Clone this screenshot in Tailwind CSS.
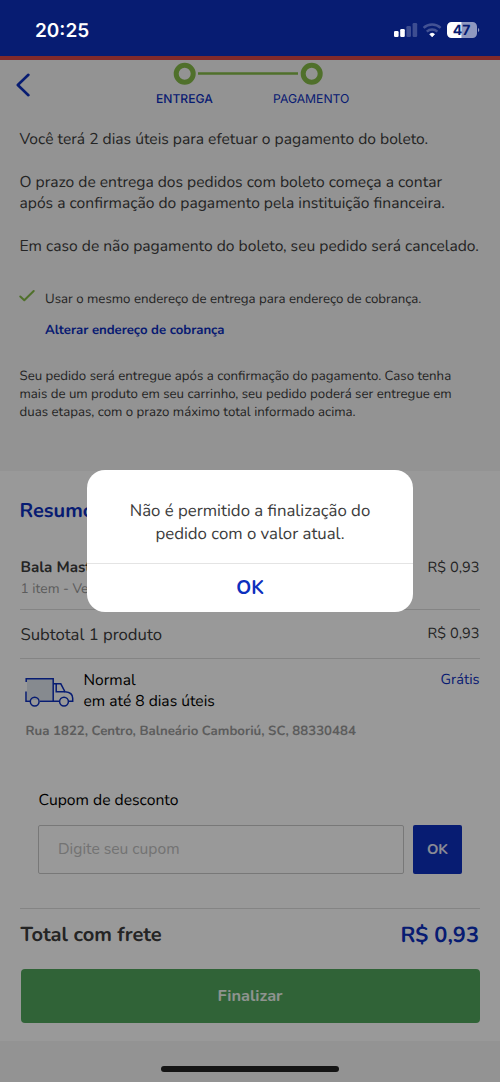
<!DOCTYPE html>
<html lang="pt-BR">
<head>
    <meta charset="UTF-8">
    <meta name="viewport" content="width=device-width, initial-scale=1.0">
    <title>Pagamento</title>
    <script src="https://cdn.jsdelivr.net/npm/@tailwindcss/browser@4"></script>
</head>
<body class="bg-[#f5f5f5] font-['Nunito','Lato',sans-serif] text-[#3c3c3c] [text-rendering:geometricPrecision]">
    <div class="relative w-[500px] h-[1082px] overflow-hidden flex flex-col">

        <!-- Status bar -->
        <div class="h-[60px] shrink-0 bg-[#0d2fbe] border-b-4 border-[#d74649]">
            <div class="relative z-20 flex items-start justify-between pl-[35px] pr-[20px] pt-[17px] text-white">
                <span class="font-['Inter',sans-serif] font-semibold text-[19px] leading-7">20:25</span>
                <svg class="w-[86px] h-[18px] mt-[4px]" viewBox="0 0 86 18">
                    <g fill="#fff">
                        <rect x="0" y="10" width="4.6" height="6" rx="1.2"/>
                        <rect x="6.2" y="8" width="4.6" height="8" rx="1.2"/>
                        <rect x="12.4" y="5" width="4.6" height="11" rx="1.2" opacity=".22"/>
                        <rect x="18.6" y="2" width="4.6" height="14" rx="1.2" opacity=".22"/>
                    </g>
                    <g fill="none" stroke="#fff" stroke-width="2.5" opacity=".24">
                        <path d="M29.6 6.9a12.4 12.4 0 0 1 17 0"/>
                        <path d="M32.8 10.6a8 8 0 0 1 10.6 0"/>
                    </g>
                    <path d="M35.7 13.2a3.7 3.7 0 0 1 4.9 0l-2.45 2.7z" fill="#fff" stroke="#fff" stroke-width=".6" stroke-linejoin="round"/>
                    <path d="M57.5 1H67.7v16H57.5a4.5 4.5 0 0 1-4.5-4.5v-7A4.5 4.5 0 0 1 57.5 1z" fill="#fff"/>
                    <path d="M67.7 1h10.8A4.5 4.5 0 0 1 83 5.5v7a4.5 4.5 0 0 1-4.5 4.5H67.7z" fill="#fff" opacity=".55"/>
                    <path d="M84 7a2.2 2.2 0 0 1 0 4z" fill="#fff" opacity=".55"/>
                    <text x="67.5" y="14" text-anchor="middle" font-family="Inter, sans-serif" font-size="14" font-weight="700" fill="#081c72">47</text>
                </svg>
            </div>
        </div>

        <!-- Checkout steps -->
        <header class="flex h-[60px] shrink-0 pl-[16px] font-['Inter',sans-serif] text-xs text-[#0d2fbe]">
            <svg class="w-4 h-6 mt-[13px]" viewBox="0 0 16 24" fill="none" stroke="#0d2fbe" stroke-width="2.6" stroke-linecap="round" stroke-linejoin="round">
                <path d="M12.4 1.8 1.8 12l10.6 10.2"/>
            </svg>
            <div class="ml-[121px]">
                <svg class="w-[200px] h-[28px]" viewBox="0 0 200 28" fill="none" stroke="#85bb49">
                    <circle cx="31.7" cy="13.7" r="8.5" stroke-width="5"/>
                    <path d="M45 13.5h100" stroke-width="2.4"/>
                    <circle cx="158.7" cy="13.7" r="8.5" stroke-width="5"/>
                </svg>
                <div class="flex gap-[60px] pl-[3px] leading-[22px]">
                    <span class="font-medium w-[57px] text-[12.1px]">ENTREGA</span>
                    <span class="text-[12.2px]">PAGAMENTO</span>
                </div>
            </div>
        </header>

        <!-- Boleto info -->
        <section class="h-[351px] shrink-0 px-[19.5px] pt-[9px] whitespace-nowrap">
            <div class="text-[15.65px] leading-[21.333px]">
                <p>Você terá 2 dias úteis para efetuar o pagamento do boleto.</p>
                <p class="mt-[21.333px]">O prazo de entrega dos pedidos com boleto começa a contar<br>após a confirmação do pagamento pela instituição financeira.</p>
                <p class="mt-[21.333px]">Em caso de não pagamento do boleto, seu pedido será cancelado.</p>
            </div>
            <div class="flex mt-[32px] text-[13.25px]">
                <svg class="w-[16px] h-[14px] -ml-[0.5px] mr-[10px]" viewBox="0 0 16 14" fill="none" stroke="#85bb49" stroke-width="2" stroke-linecap="round" stroke-linejoin="round">
                    <path d="M1.3 7.5 5.3 11.3 14.7 2"/>
                </svg>
                <div>
                    <p class="leading-5">Usar o mesmo endereço de entrega para endereço de cobrança.</p>
                    <p class="mt-[11px] leading-5 font-bold text-[13.15px] text-[#0d2fbe]">Alterar endereço de cobrança</p>
                </div>
            </div>
            <p class="mt-[27px] text-[13.25px] leading-[18px]">Seu pedido será entregue após a confirmação do pagamento. Caso tenha<br>mais de um produto em seu carrinho, seu pedido poderá ser entregue em<br>duas etapas, com o prazo máximo total informado acima.</p>
        </section>

        <!-- Order summary -->
        <section class="h-[570px] shrink-0 bg-white px-[20px] whitespace-nowrap">
            <h2 class="-ml-[0.5px] pt-[27px] text-[20px] leading-7 font-bold text-[#0d2fbe]">Resumo</h2>
            <div class="mt-[29px] px-[0.5px] flex justify-between h-[55px] border-b border-[#dcdcdc]">
                <div>
                    <p class="font-bold text-[15.2px] leading-[26px]">Bala Mastig</p>
                    <p class="text-[13.8px] leading-4 text-[#9a9a9a]">1 item - Vend</p>
                </div>
                <span class="text-[14.6px] leading-[26px]">R$ 0,93</span>
            </div>
            <div class="px-[0.5px] pt-px flex items-center justify-between h-[49px] border-b border-[#dcdcdc]">
                <span class="text-[16.7px]">Subtotal 1 produto</span>
                <span class="text-[14.6px] pt-px">R$ 0,93</span>
            </div>
            <div class="flex pt-[11px] pl-[5px] pr-[0.5px]">
                <svg class="w-[50px] h-[32px] mt-[7px]" viewBox="0 0 50 32" fill="none" stroke="#0d2fbe" stroke-width="1.5">
                    <path d="M2 2h26v21H2z" fill="#dfe6ee" stroke="none"/>
                    <path d="M1.2 5V1.7h27V24.3H15"/>
                    <path d="M1 14.5v9.8h4"/>
                    <path d="M28 6.8h7.8l4.2 8c5 .3 7.7 2.7 7.7 6.5v3h-4.2M28 24.3h6"/>
                    <path d="M31.2 7v7.8H40"/>
                    <circle cx="9.7" cy="24.6" r="4.4"/>
                    <circle cx="39" cy="24.6" r="4.4"/>
                </svg>
                <div class="ml-[8.5px] text-[15.63px] leading-[21.333px] text-black">
                    <p>Normal</p>
                    <p>em até 8 dias úteis</p>
                </div>
                <span class="ml-auto text-[14.5px] leading-5 text-[#0d2fbe]">Grátis</span>
            </div>
            <p class="mt-[8px] pl-[5.5px] text-[13.22px] leading-5 font-bold text-[#9a9a9a]">Rua 1822, Centro, Balneário Camboriú, SC, 88330484</p>

            <div class="mt-[48px] px-[18px]">
                <label class="block pl-[0.5px] text-[15.7px] leading-[22px] text-black" for="coupon">Cupom de desconto</label>
                <div class="flex gap-[9px] mt-[14px]">
                    <input id="coupon" type="text" placeholder="Digite seu cupom" class="w-[366px] h-[49px] border-[1.5px] border-[#c8c8c8] rounded-[2px] pl-[19px] text-[15.63px] placeholder:text-[#c0c0c0]">
                    <button class="w-[49px] h-[49px] pt-px rounded-[2px] bg-[#0d2fbe] text-white/90 font-bold text-[14.5px]">OK</button>
                </div>
            </div>

            <div class="mt-[34px] px-[0.5px] pt-px flex items-center justify-between h-[54px] border-t border-[#dcdcdc] font-bold">
                <span class="text-[20.1px]">Total com frete</span>
                <span class="text-[21.8px] pr-[0.5px] -mt-px text-[#0d2fbe]">R$ 0,93</span>
            </div>
            <button class="ml-[0.5px] mt-[7px] w-[459px] h-[54px] pt-[2px] rounded-[4px] bg-[#50a55d] text-white/90 font-bold text-[16.4px]">Finalizar</button>
        </section>

        <!-- Dimmed backdrop and dialog -->
        <div class="absolute inset-0 z-10 bg-black/40"></div>
        <div class="absolute z-20 left-[87px] top-[470px] w-[326px] h-[142px] rounded-[18px] bg-white text-center" role="dialog">
            <p class="h-[94px] pt-[29px] border-b border-[#e4e4e4] text-[16.8px] leading-[23px] whitespace-nowrap">Não é permitido a finalização do<br>pedido com o valor atual.</p>
            <button class="w-full h-[48px] font-bold text-[19px] text-[#0d2fbe]">OK</button>
        </div>
        <div class="absolute z-20 left-[161px] top-[1066px] w-[178px] h-[6px] rounded-full bg-[#141414]"></div>
    </div>
</body>
</html>
